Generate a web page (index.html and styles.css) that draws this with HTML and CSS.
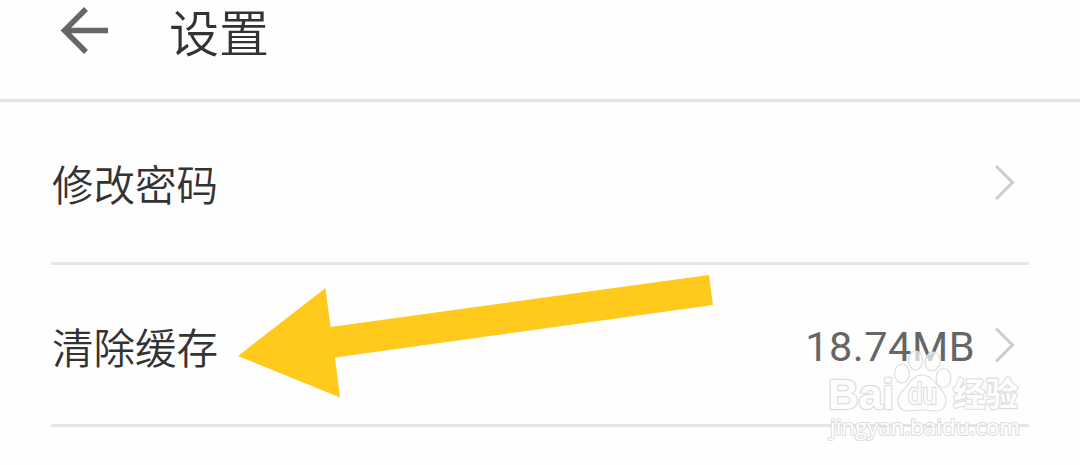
FILE: index.html
```html
<!DOCTYPE html>
<html lang="zh-CN">
<head>
  <meta charset="UTF-8">
  <meta name="viewport" content="width=device-width, initial-scale=1.0">
  <title>设置</title>
  <link rel="stylesheet" href="styles.css">
</head>
<body>
  <header class="topbar">
    <svg class="back" width="48" height="48" viewBox="0 0 48 48">
      <path d="M48 23.5H5M26 2L4.5 23.5L26 45"/>
    </svg>
    <h1>设置</h1>
  </header>

  <ul class="settings">
    <li class="row">
      <span class="label">修改密码</span>
      <svg class="chevron" width="20" height="36" viewBox="0 0 20 36">
        <path d="M1 2L17.5 18.5L1 35"/>
      </svg>
    </li>
    <li class="row">
      <span class="label">清除缓存</span>
      <span class="value">18.74MB</span>
      <svg class="chevron" width="20" height="36" viewBox="0 0 20 36">
        <path d="M1 1.5L17.5 18L1 34.5"/>
      </svg>
    </li>
  </ul>

  <!-- Freccia che indica la voce -->
  <svg class="pointer" width="476" height="124" viewBox="0 0 476 124">
    <polygon points="0,82 87.5,14 92.5,53 471,1 475,31 97,83.5 102,123.5"/>
  </svg>

  <!-- Watermark -->
  <svg class="watermark" width="210" height="100" viewBox="820 345 210 100">
    <g class="paw">
      <ellipse cx="902" cy="373.5" rx="7.5" ry="9.5"/>
      <ellipse cx="915.5" cy="360.5" rx="7" ry="9.5"/>
      <ellipse cx="932.5" cy="361.5" rx="7.5" ry="9.5" transform="rotate(10 932.5 361.5)"/>
      <ellipse cx="943.5" cy="378" rx="7.5" ry="9.5"/>
      <path d="M922 375C915 375 911 380 907 386C903 391 898 394 898 401C898 407 902 411 908 411C914 411 917 410 922 410C928 410 932 411 937 411C943 411 946 406 946 400C946 393 941 390 937 385C933 379 929 375 922 375Z"/>
    </g>
    <text class="brand" x="828" y="409" textLength="66" lengthAdjust="spacingAndGlyphs">Bai</text>
    <text class="du" x="908" y="404" textLength="29" lengthAdjust="spacingAndGlyphs">du</text>
    <text class="cn" x="953" y="406" textLength="65" lengthAdjust="spacingAndGlyphs">经验</text>
    <text class="site" x="830" y="435" textLength="190" lengthAdjust="spacingAndGlyphs">jingyan.baidu.com</text>
  </svg>
</body>
</html>
```
FILE: styles.css
```css
* {
  box-sizing: border-box;
  margin: 0;
  padding: 0;
}
body {
  position: relative;
  height: 465px;
  overflow: hidden;
  background: #fefefe;
  color: #333;
  font-family: Roboto, "Noto Sans CJK SC", sans-serif;
}
/* Barra superiore */
.topbar {
  display: flex;
  align-items: flex-start;
  height: 102px;
  padding-left: 60px;
  border-bottom: 3px solid #e5e5e5;
}
.back {
  margin-top: 7px;
  fill: none;
  stroke: #666;
  stroke-width: 5.5;
}
h1 {
  margin: -2px 0 0 61px;
  font-size: 50px;
  font-weight: 350;
  line-height: 74px;
}
/* Elenco delle voci */
.settings {
  list-style: none;
  padding: 0 51px;
}
.row {
  display: flex;
  align-items: center;
  height: 162px;
  padding-right: 14px;
  border-bottom: 3px solid #e5e5e5;
}
.row:first-child {
  height: 163px;
}
.label {
  flex: 1;
  padding: 2px 0 0 1px;
  font-size: 41.5px;
  font-weight: 350;
}
.value {
  padding-top: 4px;
  margin-right: 20px;
  color: #666;
  font-size: 41.5px;
  letter-spacing: 0.5px;
}
.chevron {
  fill: none;
  stroke: #ccc;
  stroke-width: 3;
}
/* Elementi sovrapposti */
.pointer {
  position: absolute;
  left: 238px;
  top: 274px;
  fill: #ffca1b;
}
.watermark {
  position: absolute;
  left: 820px;
  top: 345px;
  fill: #fefefe;
  stroke: #dedede;
  stroke-width: 1.2;
}
.watermark text {
  paint-order: stroke;
  stroke-linejoin: round;
}
.paw {
  fill: rgba(254, 254, 254, 0.7);
}
.brand {
  font: 700 42px "Liberation Sans", sans-serif;
  stroke-width: 2.6;
}
.du {
  font: 400 29px "Liberation Sans", sans-serif;
  stroke-width: 2.5;
}
.cn {
  font: 700 33px "Noto Sans CJK SC", sans-serif;
  stroke-width: 2.4;
}
.site {
  font: 400 22px "Open Sans", sans-serif;
  stroke-width: 2.2;
}
```
